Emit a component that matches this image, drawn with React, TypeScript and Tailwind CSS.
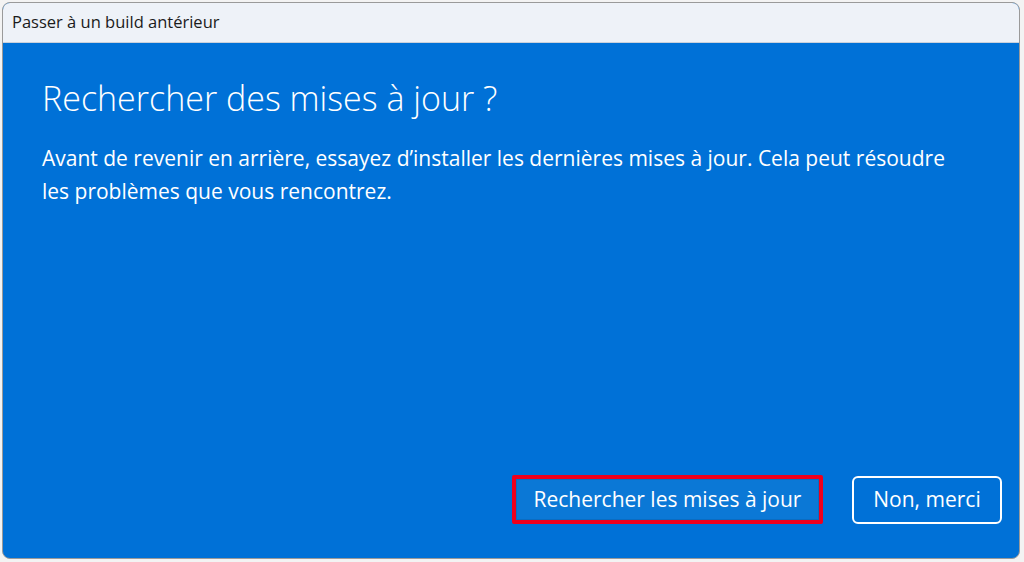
export default function App() {
  return (
    <div
      className="w-[1024px] h-[562px] bg-[#f3f3f3] p-[2px] pr-[4px] pb-[3px]"
      style={{ fontFamily: '"Open Sans", "Noto Sans", sans-serif' }}
    >
      <div className="h-full flex flex-col rounded-[8px] overflow-hidden border border-[#9a9a9a] bg-[#0071d7]">
        {/* Title bar */}
        <div className="h-[40px] shrink-0 flex items-center px-[9px] bg-[#eef2f8] border-b border-[#c9d1dc]">
          <span className="text-[16.5px] text-[#1b1b1b]">Passer à un build antérieur</span>
        </div>

        {/* Content */}
        <div className="flex-1 flex flex-col px-[39px] pt-[33px] pb-[34px] text-white">
          <h1 className="text-[34px] font-light leading-[44px]">Rechercher des mises à jour ?</h1>
          <p className="mt-[22px] text-[21px] leading-[33px] max-w-[920px]">
            Avant de revenir en arrière, essayez d’installer les dernières mises à jour. Cela peut résoudre les problèmes que vous rencontrez.
          </p>

          <div className="mt-auto flex justify-end items-center gap-[29px] mr-[-22px]">
            <div className="border-4 border-[#f0001c] rounded-[2px]">
              <button className="h-[41px] w-[303px] bg-[#0b78d6] border border-[#0a6cc2] text-[21px] text-white">
                Rechercher les mises à jour
              </button>
            </div>
            <button className="h-[48px] w-[150px] border-2 border-white rounded-[6px] text-[21px] text-white">
              Non, merci
            </button>
          </div>
        </div>
      </div>
    </div>
  );
}
